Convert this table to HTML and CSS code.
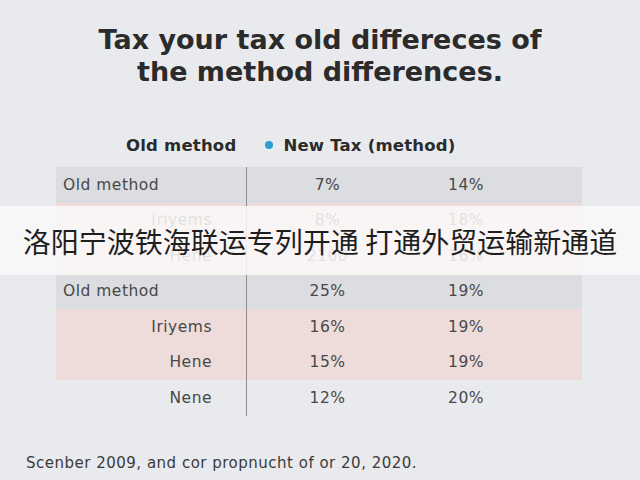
FILE: index.html
```html
<!DOCTYPE html>
<html>
<head>
<meta charset="utf-8">
<link rel="stylesheet" href="styles.css">
</head>
<body>
<div class="page">
  <h1 class="title">Tax your tax old differeces of<br>the method differences.</h1>
  <div class="legend">
    <span class="legend-item">Old method</span>
    <span class="legend-item"><span class="dot"></span>New Tax (method)</span>
  </div>
  <div class="table">
    <div class="row gray"><div class="label left">Old method</div><div class="val v2">7%</div><div class="val">14%</div><div></div></div>
    <div class="row pink"><div class="label">Iriyems</div><div class="val v2">8%</div><div class="val">18%</div><div></div></div>
    <div class="row pink"><div class="label">Hene</div><div class="val v2">2100</div><div class="val">16%</div><div></div></div>
    <div class="row gray"><div class="label left">Old method</div><div class="val v2">25%</div><div class="val">19%</div><div></div></div>
    <div class="row pink"><div class="label">Iriyems</div><div class="val v2">16%</div><div class="val">19%</div><div></div></div>
    <div class="row pink"><div class="label">Hene</div><div class="val v2">15%</div><div class="val">19%</div><div></div></div>
    <div class="row"><div class="label">Nene</div><div class="val v2">12%</div><div class="val">20%</div><div></div></div>
  </div>
  <p class="footer">Scenber 2009, and cor propnucht of or 20, 2020.</p>
  <div class="banner">洛阳宁波铁海联运专列开通 打通外贸运输新通道</div>
</div>
</body>
</html>
```
FILE: styles.css
```css
html, body {
  margin: 0;
  padding: 0;
}
body {
  background: #e9eaed;
  width: 640px;
  height: 480px;
  overflow: hidden;
}
.page {
  position: relative;
  width: 640px;
  height: 480px;
  display: flex;
  flex-direction: column;
  font-family: "DejaVu Sans", "Open Sans", sans-serif;
  color: #3a3a3a;
}
.title {
  margin: 24px 0 0;
  font-family: "DejaVu Sans", "Open Sans", sans-serif;
  font-weight: 700;
  font-size: 27px;
  line-height: 32px;
  text-align: center;
  color: #2b2b2b;
}
.legend {
  margin-top: 47px;
  padding-left: 126px;
  display: flex;
  gap: 29px;
  height: 20px;
  align-items: center;
  font-weight: 700;
  font-size: 16.5px;
  letter-spacing: 0.2px;
  color: #2b2b2b;
}
.legend-item {
  display: flex;
  align-items: center;
}
.dot {
  width: 8px;
  height: 8px;
  border-radius: 50%;
  background: #2a9fd0;
  margin-right: 10px;
}
.table {
  margin: 12px 0 0 56px;
  width: 526px;
  display: flex;
  flex-direction: column;
}
.row {
  display: grid;
  grid-template-columns: 190px 162px 116px 1fr;
  height: 35.5px;
  align-items: center;
  font-size: 15.5px;
  letter-spacing: 0.5px;
  color: #484848;
}
.row > div {
  height: 100%;
  display: flex;
  align-items: center;
}
.gray { background: #dcdde0; }
.pink { background: #eedcda; }
.label {
  justify-content: flex-end;
  padding-right: 34px;
}
.label.left {
  justify-content: flex-start;
  padding-left: 7px;
  padding-right: 0;
}
.val {
  justify-content: center;
}
.v2 {
  border-left: 1.5px solid #8d8d90;
}
.footer {
  margin: 38px 0 0 26px;
  font-size: 15px;
  letter-spacing: 0.5px;
  line-height: 18px;
  color: #3a3a3a;
}
.banner {
  position: absolute;
  left: 0;
  top: 206px;
  width: 640px;
  height: 69px;
  background: rgba(250, 249, 249, 0.86);
  display: flex;
  align-items: center;
  justify-content: center;
  font-family: "Noto Sans CJK SC", sans-serif;
  font-size: 28px;
  color: #1e1e1e;
  white-space: pre;
}
```
